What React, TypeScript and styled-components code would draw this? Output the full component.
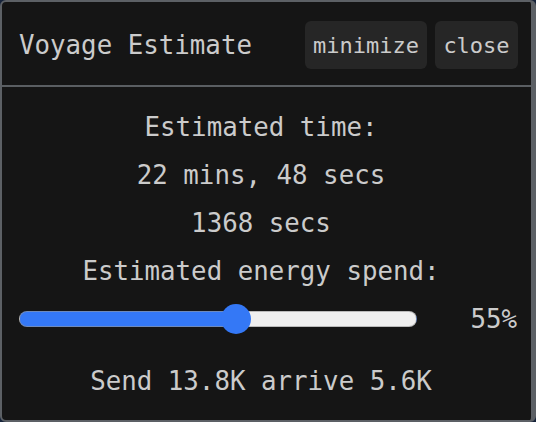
import React, { useState } from 'react';
import styled, { createGlobalStyle } from 'styled-components';

const GlobalStyle = createGlobalStyle`
	html, body {
		margin: 0;
		padding: 0;
		background: #16233a;
	}
	* {
		box-sizing: border-box;
	}
`;

const Window = styled.div`
	width: 536px;
	height: 422px;
	display: flex;
	flex-direction: column;
	background: #151515;
	border: 2px solid #5c6065;
	border-right-width: 5px;
	border-radius: 6px;
	color: #cbcbcb;
	font-family: 'DejaVu Sans Mono', 'Liberation Mono', monospace;
	overflow: hidden;
`;

const Header = styled.header`
	display: flex;
	align-items: center;
	justify-content: space-between;
	padding: 19px 13px 16px 17px;
	border-bottom: 2px solid #5a5e62;
`;

const Title = styled.h1`
	margin: 0;
	font-size: 25.8px;
	font-weight: normal;
	line-height: 48px;
`;

const Actions = styled.div`
	display: flex;
	gap: 8px;
`;

const Button = styled.button<{ $width: number }>`
	width: ${(p) => p.$width}px;
	height: 48px;
	padding: 0;
	border: none;
	border-radius: 6px;
	background: #262626;
	color: #cbcbcb;
	font-family: inherit;
	font-size: 22px;
	cursor: pointer;
`;

const Body = styled.main`
	flex: 1;
	display: flex;
	flex-direction: column;
	align-items: center;
	padding: 16px 28px 0 17px;
`;

const Line = styled.div`
	font-size: 25.8px;
	line-height: 48px;
	text-align: center;
	white-space: nowrap;
`;

const SliderRow = styled.div`
	align-self: stretch;
	display: flex;
	align-items: center;
	height: 48px;
	margin-right: -14px;
`;

const Range = styled.input`
	-webkit-appearance: none;
	appearance: none;
	width: 398px;
	height: 30px;
	margin: 0;
	background: transparent;

	&::-webkit-slider-runnable-track {
		height: 16px;
		border-radius: 8px;
		border: 1px solid rgba(150, 150, 150, 0.6);
		background: linear-gradient(
			to right,
			#3478f6 0 var(--fill),
			#efefef var(--fill) 100%
		);
	}

	&::-webkit-slider-thumb {
		-webkit-appearance: none;
		width: 30px;
		height: 30px;
		margin-top: -8px;
		border: none;
		border-radius: 50%;
		background: #3478f6;
	}
`;

const Percent = styled.span`
	flex: 1;
	text-align: right;
	font-size: 25.8px;
`;

const Summary = styled(Line)`
	margin-top: 14px;
`;

export default function App() {
	const [energy, setEnergy] = useState(55);
	const fill = 15 + (energy / 100) * (398 - 30);

	return (
		<>
			<GlobalStyle />
			<Window>
				<Header>
					<Title>Voyage Estimate</Title>
					<Actions>
						<Button $width={122}>minimize</Button>
						<Button $width={83}>close</Button>
					</Actions>
				</Header>
				<Body>
					<Line>Estimated time:</Line>
					<Line>22 mins, 48 secs</Line>
					<Line>1368 secs</Line>
					<Line>Estimated energy spend:</Line>
					<SliderRow>
						<Range
							type="range"
							min={0}
							max={100}
							value={energy}
							onChange={(e) => setEnergy(Number(e.target.value))}
							style={{ '--fill': `${fill}px` } as React.CSSProperties}
						/>
						<Percent>{energy}%</Percent>
					</SliderRow>
					<Summary>Send 13.8K arrive 5.6K</Summary>
				</Body>
			</Window>
		</>
	);
}
